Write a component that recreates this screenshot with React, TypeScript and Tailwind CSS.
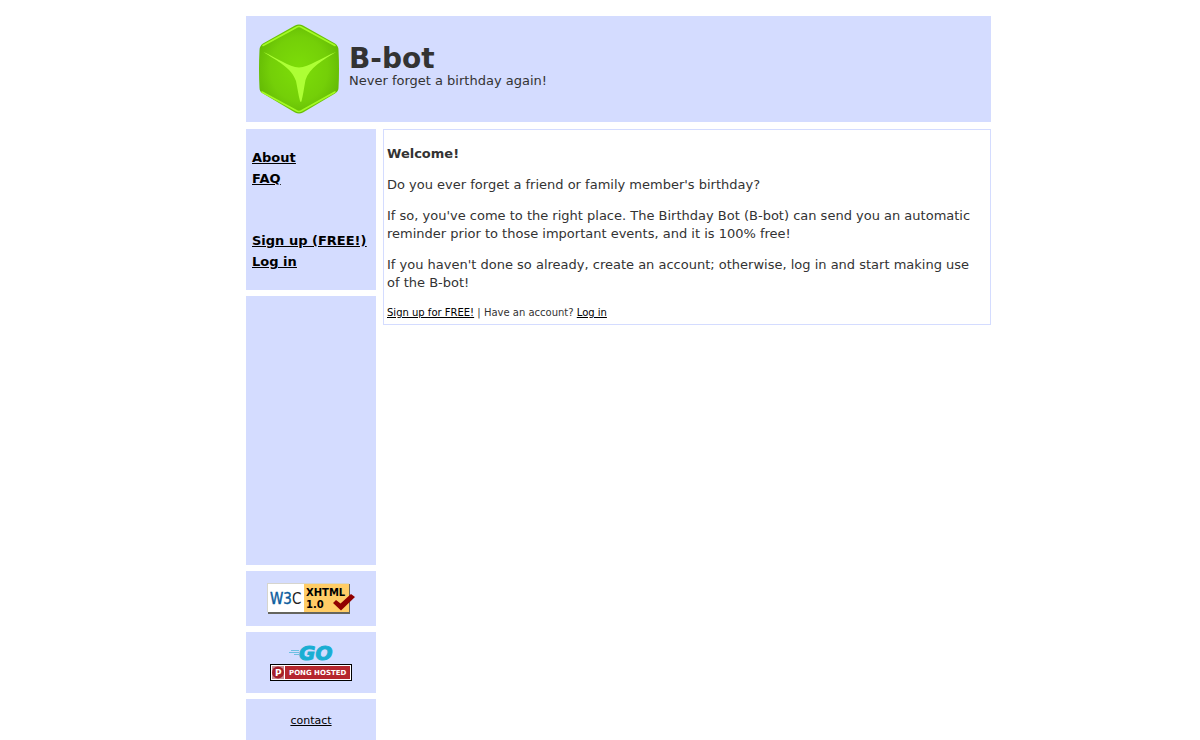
import type { ReactNode } from "react";

interface PanelProps {
  className?: string;
  children?: ReactNode;
}

function Panel({ className = "", children }: PanelProps) {
  return <div className={`bg-[#d4dcff] ${className}`}>{children}</div>;
}

function CubeLogo() {
  return (
    <svg width="80" height="90" viewBox="0 0 80 90" role="img" aria-label="B-bot logo">
      <defs>
        <radialGradient id="cube" cx="0.5" cy="0.5" r="0.6">
          <stop offset="0" stopColor="#7ddd08" />
          <stop offset="0.6" stopColor="#74cf08" />
          <stop offset="1" stopColor="#5fb404" />
        </radialGradient>
      </defs>
      <path
        d="M36 1.5 Q40 -0.6 44 1.5 L76 19.5 Q79.5 22 79.5 26 Q80.5 45 79.5 64 Q79.5 67 76 69.5 L44 88.5 Q40 90.6 36 88.5 L4 69.5 Q0.5 67.5 0.5 64 Q-0.5 45 0.5 26 Q0.5 22 4 19.5 Z"
        fill="url(#cube)"
      />
      <path
        d="M4 21.5 L37 3.5 Q40 1.5 43 3.5 L76 21.5 M3 68 L37 86.5 Q40 88.5 43 86.5 L76 68"
        fill="none"
        stroke="#a4fa25"
        strokeWidth="1.6"
        strokeLinecap="round"
      />
      <path
        d="M4.5 28 C18 34 30 43 40 43.5 C50 43 62 34 77 28 C64 36 50 44 46.5 56 C45 64 44 72 42.5 77 Q42 79 41 77 C39.5 72 38.5 64 37 57 C33 44 18 37 4.5 28 Z"
        fill="#adff35"
      />
    </svg>
  );
}

function XhtmlBadge() {
  return (
    <svg width="88" height="31" viewBox="0 0 88 31" role="img" aria-label="Valid XHTML 1.0">
      <rect x="1" y="1" width="82" height="30" fill="#65655e" />
      <rect x="0" y="0" width="82" height="29" fill="#d6d5ce" />
      <rect x="1" y="1" width="36" height="28" fill="#fff" />
      <rect x="37" y="1" width="45" height="28" fill="#fc6" />
      <text
        x="3"
        y="21"
        fontFamily="'DejaVu Sans Condensed', 'DejaVu Sans', sans-serif"
        fontSize="15"
        fill="#0b5c9d"
        stroke="#0b5c9d"
        strokeWidth="0.4"
      >
        W3
        <tspan fill="#222" stroke="none">
          C
        </tspan>
      </text>
      <g fontFamily="'DejaVu Sans', sans-serif" fontWeight="bold" fontSize="10" fill="#000">
        <text x="39" y="13">XHTML</text>
        <text x="39" y="25">1.0</text>
      </g>
      <path d="M66 20 L69 17 L73.5 20.5 L84 11 L88 14 L74 27.5 Z" fill="#900000" />
    </svg>
  );
}

function GoLogo() {
  return (
    <svg width="46" height="18" viewBox="0 0 46 18" className="overflow-visible" role="img" aria-label="Go">
      <path d="M3 6.5 H11 M1 8.5 H11 M6 10.5 H11" stroke="#6cc0e2" strokeWidth="1" />
      <text
        x="11"
        y="16"
        fontFamily="'DejaVu Sans', sans-serif"
        fontWeight="bold"
        fontStyle="italic"
        fontSize="20"
        fill="#1aaed3"
        stroke="#1aaed3"
        strokeWidth="1"
      >
        GO
      </text>
    </svg>
  );
}

function PongBadge() {
  return (
    <svg width="82" height="17" viewBox="0 0 82 17" role="img" aria-label="Pong hosted">
      <rect width="82" height="17" fill="#000" />
      <rect x="1" y="1" width="80" height="15" fill="#fff" />
      <rect x="2" y="2" width="12" height="13" fill="#c98a92" />
      <circle cx="8" cy="8.5" r="6" fill="#a51f29" />
      <rect x="15" y="2" width="65" height="13" fill="#b5262e" />
      <g fontFamily="'DejaVu Sans', sans-serif" fontWeight="bold" fill="#fff">
        <text x="5" y="12" fontSize="9">
          P
        </text>
        <text x="19" y="11" fontSize="7">
          PONG HOSTED
        </text>
      </g>
    </svg>
  );
}

export default function App() {
  return (
    <div className="bg-white pt-4 pl-[37px] font-['Verdana','DejaVu_Sans',sans-serif] text-[13px] leading-[18px] text-[#333]">
      <div className="mx-auto flex max-w-[745px] flex-col gap-[7px]">
        <header className="flex bg-[#d4dcff] pt-2 pb-2 pl-[13px]">
          <CubeLogo />
          <div className="ml-2.5 pt-[21px]">
            <h1 className="text-[28px] leading-7 font-bold">B-bot</h1>
            <p className="leading-4">Never forget a birthday again!</p>
          </div>
        </header>

        <div className="flex items-start gap-[7px]">
          <aside className="flex w-[130px] shrink-0 flex-col gap-1.5">
            <Panel className="px-1.5 pt-[18px] pb-[18px]">
              <nav className="flex flex-col items-start leading-[21px] font-bold whitespace-nowrap text-black underline">
                <a href="#about">About</a>
                <a href="#faq">FAQ</a>
                <a href="#signup" className="mt-[41px]">
                  Sign up (FREE!)
                </a>
                <a href="#login">Log in</a>
              </nav>
            </Panel>

            {/* Ad slot */}
            <Panel className="h-[269px]" />

            <Panel className="flex justify-center py-3">
              <a href="#xhtml">
                <XhtmlBadge />
              </a>
            </Panel>

            <Panel className="flex flex-col items-center gap-0.5 py-3">
              <a href="#go">
                <GoLogo />
              </a>
              <a href="#pong">
                <PongBadge />
              </a>
            </Panel>

            <Panel className="pt-[13px] pb-2.5 text-center text-[11px]">
              <a href="#contact" className="text-black underline">
                contact
              </a>
            </Panel>
          </aside>

          <main className="flex min-w-0 flex-1 flex-col gap-[13px] border border-[#d4dcff] pt-[15px] pr-2 pb-[3px] pl-[3px]">
            <h2 className="font-bold">Welcome!</h2>
            <p>Do you ever forget a friend or family member's birthday?</p>
            <p>
              If so, you've come to the right place. The Birthday Bot (B-bot) can send you an automatic
              reminder prior to those important events, and it is 100% free!
            </p>
            <p>
              If you haven't done so already, create an account; otherwise, log in and start making use
              of the B-bot!
            </p>
            <p className="text-[10px] leading-4">
              <a href="#signup" className="text-black underline">
                Sign up for FREE!
              </a>{" "}
              | Have an account?{" "}
              <a href="#login" className="text-black underline">
                Log in
              </a>
            </p>
          </main>
        </div>
      </div>
    </div>
  );
}
